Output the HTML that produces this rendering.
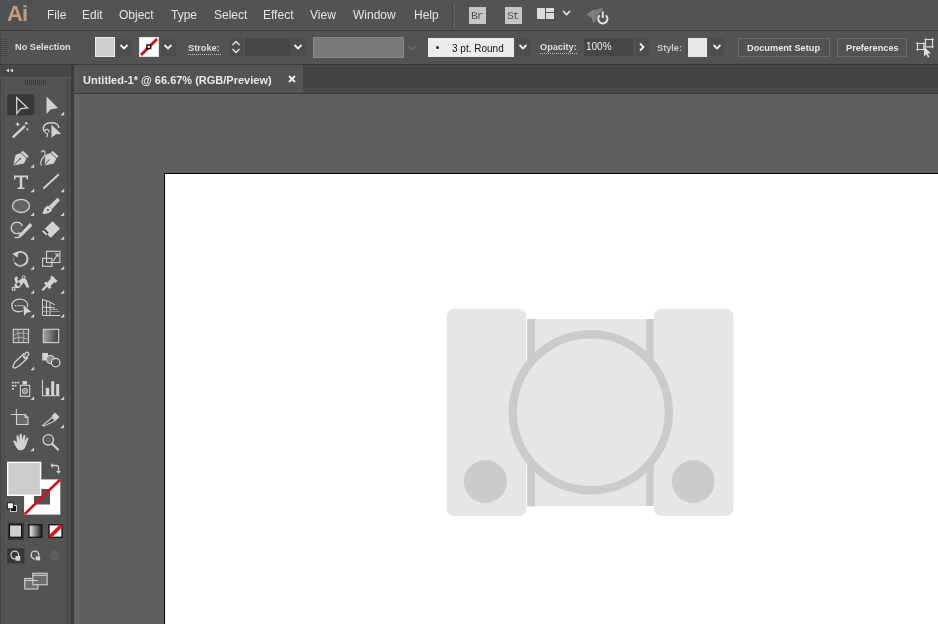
<!DOCTYPE html>
<html><head><meta charset="utf-8">
<style>
*{margin:0;padding:0;box-sizing:border-box}
html,body{width:938px;height:624px;overflow:hidden;background:#535353;font-family:"Liberation Sans",sans-serif;}
.a{position:absolute}
.mi,.lbl,div{-webkit-font-smoothing:antialiased}
body{will-change:transform}
.mi{position:absolute;top:8px;font-size:12px;color:#e4e4e4;line-height:14px;white-space:nowrap}
.lbl{position:absolute;font-size:9.2px;font-weight:bold;color:#dedede;line-height:12px;white-space:nowrap}
.chev{position:absolute;background:#4d4d4d;}
svg{position:absolute;overflow:visible}
</style></head><body>
<!-- MENU BAR -->
<div class="a" style="left:0;top:0;width:938px;height:30px;background:#535353"></div>
<div class="a" style="left:0;top:30px;width:938px;height:1px;background:#3a3a3a"></div>
<div class="a" style="left:0px;top:0px;width:32px;height:25px;background:#4e5256"></div>
<div class="a" style="left:7px;top:2px;font-size:22px;font-weight:bold;color:#c59a7c;line-height:24px;letter-spacing:-1px;text-shadow:0 0 2px rgba(120,90,70,.6)">Ai</div>
<div class="mi" style="left:47px">File</div>
<div class="mi" style="left:82px">Edit</div>
<div class="mi" style="left:119px">Object</div>
<div class="mi" style="left:171px">Type</div>
<div class="mi" style="left:214px">Select</div>
<div class="mi" style="left:263px">Effect</div>
<div class="mi" style="left:310px">View</div>
<div class="mi" style="left:353px">Window</div>
<div class="mi" style="left:414px">Help</div>
<div id="mbicons">
<div class="a" style="left:452px;top:3px;width:1px;height:24px;background:#454545"></div>
<div class="a" style="left:453px;top:3px;width:2px;height:24px;background:#5e5e5e"></div>
<div class="a" style="left:469px;top:7px;width:17px;height:17px;background:#c6c6c6"></div>
<div class="a" style="left:471px;top:9px;font-size:11.5px;color:#555;line-height:13px;font-family:'Liberation Mono',monospace;letter-spacing:-1.2px">Br</div>
<div class="a" style="left:505px;top:7px;width:17px;height:17px;background:#c6c6c6"></div>
<div class="a" style="left:507px;top:9px;font-size:11.5px;color:#555;line-height:13px;font-family:'Liberation Mono',monospace;letter-spacing:-1.2px">St</div>
<div class="a" style="left:537px;top:8px;width:8px;height:11px;background:#dadada"></div>
<div class="a" style="left:546px;top:8px;width:8px;height:3.5px;background:#dadada"></div>
<div class="a" style="left:546px;top:12.5px;width:8px;height:6.5px;background:#dadada"></div>
<svg style="left:562px;top:10px" width="9" height="6"><path d="M1 1 L4.5 4.5 L8 1" fill="none" stroke="#e8e8e8" stroke-width="1.7"/></svg>
<svg style="left:585px;top:4px" width="24" height="22" viewBox="0 0 24 22">
 <path d="M1.5 10.5 C4 8 8 5.5 11 5 L9.5 7.5 C12 5.5 15 4 18 3.5 L17 6.5 L14 9 L12 13 L10 18 L8 19 L7 14 Z" fill="#7e7e7e"/>
 <path d="M9 9 L12 12" stroke="#6c6c6c" stroke-width="0.8"/>
 <path d="M14.8 11.3 A4.6 4.6 0 1 0 20.8 11.3" fill="none" stroke="#dedede" stroke-width="2"/>
 <rect x="16.8" y="7.5" width="2" height="6.5" fill="#dedede"/>
</svg>
</div>

<!-- CONTROL BAR -->
<div id="ctrl">
<div class="a" style="left:0;top:31px;width:938px;height:33px;background:#535353"></div>
<div class="a" style="left:0px;top:33px;width:1px;height:30px;background:#474747"></div><div class="a" style="left:1px;top:39px;width:7px;height:17px;background:repeating-linear-gradient(#464646 0 1px,#585858 1px 2px)"></div>
<div class="lbl" style="left:15px;top:41px">No Selection</div>
<div class="a" style="left:95px;top:37px;width:20px;height:20px;background:#cfcfcf;border:1px solid #ececec"></div>
<div class="chev" style="left:117px;top:39px;width:15px;height:17px"></div>
<svg style="left:119px;top:44px" width="10" height="6"><path d="M1.5 1 L5 4.5 L8.5 1" fill="none" stroke="#f0f0f0" stroke-width="1.8"/></svg>
<div class="a" style="left:139px;top:37px;width:20px;height:20px;background:#fff;border:1px solid #e0e0e0"></div>
<svg style="left:139px;top:37px" width="20" height="20"><path d="M2 18 L18 2" stroke="#d0121b" stroke-width="3"/><rect x="8" y="8" width="3.6" height="3.6" fill="#fff" stroke="#200000" stroke-width="1.4"/></svg>
<div class="chev" style="left:161px;top:39px;width:15px;height:17px"></div>
<svg style="left:163px;top:44px" width="10" height="6"><path d="M1.5 1 L5 4.5 L8.5 1" fill="none" stroke="#f0f0f0" stroke-width="1.8"/></svg>
<div class="lbl" style="left:188px;top:42px;">Stroke:</div>
<div class="a" style="left:188px;top:54px;width:33px;height:1px;background:repeating-linear-gradient(90deg,#bdbdbd 0 1px,transparent 1px 2px)"></div>
<div class="chev" style="left:229px;top:38px;width:14px;height:18px"></div>
<svg style="left:231px;top:40px" width="10" height="14"><path d="M1.5 5 L5 1.5 L8.5 5 M1.5 9 L5 12.5 L8.5 9" fill="none" stroke="#e6e6e6" stroke-width="1.4"/></svg>
<div class="a" style="left:245px;top:38px;width:45px;height:18px;background:#464646"></div>
<div class="chev" style="left:290px;top:38px;width:16px;height:18px"></div>
<svg style="left:293px;top:44px" width="10" height="6"><path d="M1.5 1 L5 4.5 L8.5 1" fill="none" stroke="#f0f0f0" stroke-width="1.8"/></svg>
<div class="a" style="left:313px;top:37px;width:91px;height:21px;background:#7a7a7a;border:1px solid #888"></div>
<svg style="left:407px;top:45px" width="10" height="6"><path d="M1.5 1 L5 4.5 L8.5 1" fill="none" stroke="#6a6a6a" stroke-width="1.4"/></svg>
<div class="a" style="left:428px;top:38px;width:86px;height:19px;background:#ececec"></div>
<div class="a" style="left:436px;top:46px;width:3px;height:3px;border-radius:50%;background:#222"></div>
<div class="lbl" style="left:452px;top:43px;color:#111;font-weight:normal;font-size:10px">3 pt. Round</div>
<div class="chev" style="left:516px;top:38px;width:15px;height:18px"></div>
<svg style="left:518px;top:44px" width="10" height="6"><path d="M1.5 1 L5 4.5 L8.5 1" fill="none" stroke="#f0f0f0" stroke-width="1.8"/></svg>
<div class="lbl" style="left:540px;top:41px;">Opacity:</div>
<div class="a" style="left:540px;top:53px;width:37px;height:1px;background:repeating-linear-gradient(90deg,#bdbdbd 0 1px,transparent 1px 2px)"></div>
<div class="a" style="left:584px;top:38px;width:49px;height:18px;background:#464646"></div>
<div class="lbl" style="left:586px;top:41px;color:#eeeeee;font-weight:normal;font-size:10px">100%</div>
<div class="chev" style="left:635px;top:38px;width:14px;height:18px"></div>
<svg style="left:639px;top:42px" width="6" height="10"><path d="M1 1.5 L4.5 5 L1 8.5" fill="none" stroke="#f0f0f0" stroke-width="1.8"/></svg>
<div class="lbl" style="left:657px;top:42px;color:#c8c8c8">Style:</div>
<div class="a" style="left:688px;top:38px;width:19px;height:19px;background:#e8e8e8"></div>
<div class="chev" style="left:710px;top:38px;width:14px;height:18px"></div>
<svg style="left:712px;top:44px" width="10" height="6"><path d="M1.5 1 L5 4.5 L8.5 1" fill="none" stroke="#f0f0f0" stroke-width="1.8"/></svg>
<div class="a" style="left:738px;top:38px;width:92px;height:19px;border:1px solid #6a6a6a;background:#535353"></div>
<div class="lbl" style="left:747px;top:42px;color:#e8e8e8">Document Setup</div>
<div class="a" style="left:837px;top:38px;width:70px;height:19px;border:1px solid #6a6a6a;background:#535353"></div>
<div class="lbl" style="left:846px;top:42px;color:#e8e8e8">Preferences</div>
<svg style="left:914px;top:37px" width="22" height="22" viewBox="0 0 22 22">
 <path d="M3.5 6.5 H9.8 V12.5 H3.5Z M11.5 2.5 H18.5 V9.8 H11.5Z" fill="none" stroke="#dcdcdc" stroke-width="1.2"/>
 <path d="M2 6.5 H3.5 M3.5 5 V6.5 M9.8 5 V6.5 M10 6.5 H11 M2 12.5 H3.5 M3.5 12.5 V14 M10.5 2.5 H11.5 M11.5 1 V2.5 M18.5 1 V2.5 M18.5 2.5 H20 M18.5 9.8 H20 M18.5 9.8 V11" stroke="#c8c8c8" stroke-width="1"/>
 <path d="M10 9.5 L10 19.5 L12.2 17.3 L14 20.5 L15.5 19.7 L13.8 16.6 L17 16.5 Z" fill="#dedede"/>
</svg>
</div>
<div class="a" style="left:0;top:64px;width:938px;height:1px;background:#3a3a3a"></div>

<!-- TOOLS PANEL -->
<div class="a" style="left:0;top:65px;width:72px;height:559px;background:#535353"></div>
<div class="a" style="left:0;top:65px;width:72px;height:12px;background:#474747"></div>
<div class="a" style="left:0;top:77px;width:72px;height:1px;background:#5a5a5a"></div>
<div id="tools">
<svg style="left:0;top:0" width="74" height="624" viewBox="0 0 74 624">
 <g fill="#d8d8d8"><path d="M6 70.5 L9 68.5 L9 72.5Z M10 70.5 L13 68.5 L13 72.5Z"/></g>
 <g fill="#3e3e3e"><rect x="25" y="80" width="1" height="5"/><rect x="27" y="80" width="1" height="5"/><rect x="29" y="80" width="1" height="5"/><rect x="31" y="80" width="1" height="5"/><rect x="33" y="80" width="1" height="5"/><rect x="35" y="80" width="1" height="5"/><rect x="37" y="80" width="1" height="5"/><rect x="39" y="80" width="1" height="5"/><rect x="41" y="80" width="1" height="5"/><rect x="43" y="80" width="1" height="5"/><rect x="45" y="80" width="1" height="5"/></g>
 <rect x="7.3" y="94.2" width="27" height="21" rx="2" fill="#383838"/>
 <path d="M16.6 97.5 L27.6 108 L21 108.6 L16.8 113.6 Z" fill="none" stroke="#d2d2d2" stroke-width="1.3" stroke-linejoin="miter"/>
 <path d="M46.5 96.5 L58 108 L50.5 109.5 L46.5 114 Z" fill="#d2d2d2"/>
 <!-- corner triangles -->
 <g fill="#cfcfcf">
  <path d="M64.2 111.6 L64.2 115.4 L60.4 115.4Z"/>
  <path d="M34.2 164 L34.2 167.8 L30.4 167.8Z"/>
  <path d="M34.2 188.4 L34.2 192.2 L30.4 192.2Z"/><path d="M64.2 188.4 L64.2 192.2 L60.4 192.2Z"/>
  <path d="M34.2 212.2 L34.2 216 L30.4 216Z"/><path d="M64.2 212.2 L64.2 216 L60.4 216Z"/>
  <path d="M34.2 236 L34.2 239.8 L30.4 239.8Z"/><path d="M64.2 236 L64.2 239.8 L60.4 239.8Z"/>
  <path d="M34.2 266 L34.2 269.8 L30.4 269.8Z"/><path d="M64.2 266 L64.2 269.8 L60.4 269.8Z"/>
  <path d="M34.2 290 L34.2 293.8 L30.4 293.8Z"/><path d="M64.2 290 L64.2 293.8 L60.4 293.8Z"/>
  <path d="M34.2 313.8 L34.2 317.6 L30.4 317.6Z"/><path d="M64.2 313.8 L64.2 317.6 L60.4 317.6Z"/>
  <path d="M34.2 366.5 L34.2 370.3 L30.4 370.3Z"/>
  <path d="M34.2 396.3 L34.2 400.1 L30.4 400.1Z"/><path d="M64.2 396.3 L64.2 400.1 L60.4 400.1Z"/>
  <path d="M64 424.5 L64 428.3 L60.2 428.3Z"/>
  <path d="M34 447.5 L34 451.3 L30.2 451.3Z"/>
 </g>
 <!-- magic wand -->
 <path d="M13.5 136.6 L24.2 126.6" stroke="#d2d2d2" stroke-width="2.4" stroke-linecap="round"/>
 <path d="M17.7 121.8 L18.5 123.5 L20.2 124.3 L18.5 125.1 L17.7 126.8 L16.9 125.1 L15.2 124.3 L16.9 123.5Z" fill="#d2d2d2"/>
 <circle cx="26.2" cy="123.2" r="1.3" fill="#d2d2d2"/><circle cx="27.3" cy="129.3" r="1.1" fill="#d2d2d2"/>
 <!-- lasso -->
 <path d="M44.5 131.5 C42 128 43.5 123.5 50 122.8 C55.5 122.3 59 124.5 58.8 128" fill="none" stroke="#d2d2d2" stroke-width="1.4"/>
 <path d="M49 132.5 C49.5 130 47 128.5 45.5 129.8 C44 131 45 133.5 47 133.5 C48 133.5 47.5 136 46.5 137" fill="none" stroke="#d2d2d2" stroke-width="1.2"/>
 <path d="M51.3 124.5 L61.2 134 L56 134.3 L51.5 137.8 Z" fill="#d2d2d2"/>
 <!-- pen -->
 <path d="M22.7 150.7 L28.8 156.2 L27 158 L21 152.5Z" fill="#d2d2d2"/>
 <path d="M20.5 153 L26.5 158.5 L24 163.5 L13.3 165.5 L15.5 155Z" fill="#d2d2d2"/>
 <path d="M13.6 165.2 L19.5 159.3" stroke="#535353" stroke-width="1"/><circle cx="20" cy="158.8" r="1" fill="#535353"/>
 <!-- curvature pen -->
 <path d="M52.5 150.7 L58.6 156.2 L56.8 158 L50.8 152.5Z" fill="#d2d2d2"/>
 <path d="M50.3 153 L56.3 158.5 L53.8 163.5 L44.5 165.5 L45.5 155Z" fill="#d2d2d2"/>
 <path d="M44.8 165.2 L49.3 159.3" stroke="#535353" stroke-width="1"/>
 <path d="M41.3 165.5 C40 162 41 160 43 158 C45 156 45.5 153 44.5 151.5 C43.5 150 41.5 151 41.5 152.5" fill="none" stroke="#d2d2d2" stroke-width="1.2"/>
 <!-- type -->
 <path d="M14 175.5 L28 175.5 L28 179.5 L26.8 179.5 L26.2 177.3 L22.2 177.3 L22.2 187.5 L24.5 187.5 L24.5 189 L17.5 189 L17.5 187.5 L19.8 187.5 L19.8 177.3 L15.8 177.3 L15.2 179.5 L14 179.5Z" fill="#d2d2d2"/>
 <!-- line -->
 <path d="M44 188 L58.3 174.8" stroke="#d2d2d2" stroke-width="1.9" stroke-linecap="round"/>
 <!-- ellipse -->
 <ellipse cx="21" cy="205.9" rx="8.5" ry="6.6" fill="#646464" stroke="#d2d2d2" stroke-width="1.3"/>
 <!-- paintbrush -->
 <path d="M57.5 197.8 L60 200.3 L52 209 L49 206Z" fill="#d2d2d2"/>
 <path d="M48.2 205.5 L52.2 209.5 C51 212.5 47.5 214.2 42.7 214 C43.2 209.8 45 206.5 48.2 205.5Z" fill="#d2d2d2"/>
 <circle cx="48" cy="210" r="1" fill="#535353"/>
 <!-- shaper -->
 <path d="M20.5 232.5 A5.8 5.8 0 1 1 22.5 226" fill="#606060" stroke="#d2d2d2" stroke-width="1.3"/>
 <path d="M30 223 L32.5 225.5 L21 237 L18.2 238 L18.8 235Z" fill="#d2d2d2"/>
 <path d="M19 237.5 L14.5 237.5" stroke="#d2d2d2" stroke-width="1.2"/>
 <!-- eraser -->
 <path d="M52.5 221.3 L60 228.8 L49.5 239 L42 231.5Z" fill="#d2d2d2"/>
 <path d="M43.5 230 L47.5 234 L48.7 232.8 L44.7 228.8Z M46 235.5 L50 239.3 L51 238.3 L47 234.5Z" fill="#3a3a3a"/>
 <!-- rotate -->
 <path d="M15.5 254 A7 7 0 1 1 14.8 263" fill="none" stroke="#d2d2d2" stroke-width="1.9"/>
 <path d="M12.2 253.8 L18.5 251.5 L17.5 257.5Z" fill="#d2d2d2"/>
 <path d="M14.5 262.5 A7 7 0 0 1 13.8 257" fill="none" stroke="#a0a0a0" stroke-width="1.2" stroke-dasharray="1.2 1.2"/>
 <path d="M17 265.5 L24 265.5" stroke="#a0a0a0" stroke-width="1" stroke-dasharray="1.2 1.2"/>
 <!-- scale -->
 <rect x="46.5" y="251.3" width="13.4" height="11.2" fill="none" stroke="#d2d2d2" stroke-width="1.1"/>
 <rect x="42.6" y="258.3" width="9.3" height="8" fill="none" stroke="#d2d2d2" stroke-width="1.1"/>
 <path d="M53 261 L58 254 M55 254 L58 254 L58 257" fill="none" stroke="#d2d2d2" stroke-width="1.2"/>
 <!-- warp -->
 <path d="M15.5 277 C16.5 276 18 276.5 17.8 278 L17.3 280.5 C18.5 281 20 280 21 279 C22.5 277.5 25.5 278 26.5 280 C27.5 282 28.5 285.5 29.5 287.5 L26.5 287.5 C25.5 285.5 24.5 283 23.5 282.5 C22.5 284 21.5 286 19.5 287.5 C18 288.5 16 288.5 15 287.5 C14 286 14.5 284.5 15.5 283.5 C16 282.5 15 281 14.5 280 C14 279 14.5 277.8 15.5 277Z" fill="#d2d2d2"/>
 <circle cx="18.5" cy="284.2" r="1.5" fill="#535353" stroke="#535353"/>
 <circle cx="23.7" cy="277.2" r="1.5" fill="none" stroke="#d2d2d2" stroke-width="1"/>
 <rect x="12.3" y="287.6" width="2.6" height="2.6" fill="none" stroke="#d2d2d2" stroke-width="1"/>
 <!-- pin -->
 <path d="M52 275.5 L57.5 281 L55.5 283 L54.5 282 L50.5 286 L51.5 287 L49.5 289 L44 283.5 L46 281.5 L47 282.5 L51 278.5 L50 277.5Z" fill="#d2d2d2"/>
 <path d="M47 285.5 L42.8 289.7" stroke="#d2d2d2" stroke-width="2.2" stroke-linecap="round"/>
 <!-- shape builder -->
 <path d="M23 310.5 C20 312 16 312 13.5 310 C11 307.5 11.5 303 14 301 C17 298.5 22 298.5 25 300.5 C27.5 302 28 305 27 307" fill="none" stroke="#d2d2d2" stroke-width="1.3"/>
 <g fill="#d2d2d2"><rect x="14.8" y="305" width="1.3" height="1.3"/><rect x="17" y="305" width="1.3" height="1.3"/><rect x="19.2" y="305" width="1.3" height="1.3"/><rect x="21.4" y="305" width="1.3" height="1.3"/></g>
 <path d="M23.5 305 L31.3 312 L27 312.5 L24 316 Z" fill="#d2d2d2"/>
 <!-- perspective grid -->
 <path d="M42.5 299 L42.5 315.5 L60 315.5 M42.5 299.3 L50 302 L55 305 M42.5 307 L50 307.5 L55 308 M46.5 300.5 L46.5 315 M50 302 L50 315" fill="none" stroke="#d2d2d2" stroke-width="1"/>
 <path d="M42.5 311.5 L59.5 311.5 M50 309.5 L58 309.5" stroke="#a8a8a8" stroke-width="0.8"/>
 <!-- mesh -->
 <rect x="13.3" y="329.3" width="15.3" height="13.3" fill="#5e5e5e" stroke="#d2d2d2" stroke-width="1.1"/>
 <path d="M13.3 336 C17 333 19 332 28.5 334 M13.3 339 C18 337 22 337 28.5 339.5 M18 329.3 C17 333 19.5 337 18.5 342.6 M23.5 329.3 C22.5 333 25 337 23 342.6" fill="none" stroke="#b8b8b8" stroke-width="0.9"/>
 <!-- gradient -->
 <defs><linearGradient id="gr" x1="0" x2="1"><stop offset="0" stop-color="#a4a4a4"/><stop offset="1" stop-color="#3e3e3e"/></linearGradient>
 <linearGradient id="gr2" x1="0" x2="1"><stop offset="0" stop-color="#f4f4f4"/><stop offset="1" stop-color="#1a1a1a"/></linearGradient></defs>
 <rect x="43.3" y="329.3" width="15.3" height="13.3" fill="url(#gr)" stroke="#d2d2d2" stroke-width="1.1"/>
 <!-- eyedropper -->
 <path d="M26 352.5 C27.5 351.5 29.5 353.5 28.5 355 L26.5 357 L27.5 358 L26 359.5 L19 366 L15 368 L13.3 367.5 L13 366 L15 362 L22 355.5 L23.5 354 L24.5 355Z" fill="none" stroke="#d2d2d2" stroke-width="1.3"/>
 <path d="M23 356 L26.5 359.5" stroke="#d2d2d2" stroke-width="1.8"/>
 <!-- blend -->
 <rect x="42.2" y="353" width="5.8" height="7.5" fill="#d2d2d2"/>
 <circle cx="50.5" cy="359.5" r="4" fill="#8a8a8a" stroke="#d2d2d2" stroke-width="1.1"/>
 <circle cx="55.7" cy="362.6" r="4.3" fill="#535353" stroke="#d2d2d2" stroke-width="1.2"/>
 <!-- symbol sprayer -->
 <g fill="#d2d2d2"><rect x="12" y="381.7" width="1.8" height="1.8"/><rect x="14.7" y="381.7" width="1.8" height="1.8"/><rect x="17.4" y="381.7" width="1.8" height="1.8"/><rect x="12" y="384.9" width="1.8" height="1.8"/><rect x="14.7" y="384.9" width="1.8" height="1.8"/><rect x="12" y="388" width="1.8" height="1.8"/></g>
 <rect x="22.5" y="381" width="4.5" height="3.5" fill="#d2d2d2"/>
 <rect x="20.4" y="385.3" width="9.3" height="11" fill="none" stroke="#d2d2d2" stroke-width="1.1"/>
 <circle cx="24.9" cy="390.9" r="2.4" fill="none" stroke="#d2d2d2" stroke-width="1.2"/><circle cx="24.9" cy="390.9" r="0.8" fill="#d2d2d2"/>
 <!-- column graph -->
 <path d="M42.5 379.8 L42.5 395.8 L59.6 395.8" fill="none" stroke="#d2d2d2" stroke-width="1.1"/>
 <rect x="45.8" y="387.8" width="3.4" height="8" fill="#d2d2d2"/><rect x="51.2" y="381.3" width="3" height="14.5" fill="#d2d2d2"/><rect x="56.2" y="384" width="3" height="11.8" fill="#d2d2d2"/>
 <!-- artboard -->
 <path d="M16.3 409 L16.3 414.5 L10.8 414.5" fill="none" stroke="#d2d2d2" stroke-width="1"/>
 <path d="M16.5 414.5 L25 414.5 L28 417.5 L28 424.5 L16.5 424.5Z" fill="#6a6a6a" stroke="#d2d2d2" stroke-width="1.1"/>
 <path d="M25 414.5 L25 417.5 L28 417.5" fill="none" stroke="#d2d2d2" stroke-width="1"/>
 <!-- slice -->
 <path d="M55 412.5 L59.5 417 L56 420.5 L51.5 416Z" fill="#d2d2d2"/>
 <path d="M52 417.5 L55.2 420.7 L44 426 L42.5 425.5Z" fill="none" stroke="#d2d2d2" stroke-width="1.1"/>
 <!-- hand -->
 <path d="M14 443 C12.5 441.8 13.5 440 15 440.8 L17 442.5 L16.5 436.5 C16.3 435 18.3 434.8 18.6 436.3 L19.5 440 L19.7 434.8 C19.8 433.5 21.8 433.5 21.9 434.8 L22.1 440 L23.4 435.8 C23.8 434.5 25.6 435 25.4 436.3 L24.7 441 L26.5 438 C27.3 437 28.8 437.8 28.3 439 L26 445.5 C25 448.5 23.5 450.3 20.5 450.3 C17.5 450.3 16.5 448 14 443Z" fill="#d2d2d2"/>
 <!-- zoom -->
 <circle cx="48.3" cy="439.8" r="5.2" fill="none" stroke="#d2d2d2" stroke-width="1.4"/>
 <circle cx="48.3" cy="439.8" r="1.8" fill="none" stroke="#8a8a8a" stroke-width="0.8"/>
 <path d="M52 443.8 L58 449.5" stroke="#d2d2d2" stroke-width="2.2" stroke-linecap="round"/>
 <!-- fill / stroke -->
 <rect x="24.1" y="479.4" width="36.2" height="35.2" fill="#ffffff"/>
 <rect x="34" y="489" width="16" height="15.5" fill="#535353"/>
 <path d="M24.6 514.2 L60 479.8" stroke="#d4101a" stroke-width="2.6"/>
 <rect x="7" y="461.7" width="34.3" height="34.3" fill="#ffffff"/>
 <rect x="8.4" y="463.1" width="31.5" height="31.5" fill="#cccccc"/>
 <!-- swap arrows -->
 <path d="M51 465.5 L56.5 465.5 Q58.5 465.5 58.5 467.5 L58.5 471" fill="none" stroke="#d2d2d2" stroke-width="1.3"/>
 <path d="M50.5 465.5 L53 463 L53 468Z M58.5 473.8 L56 471 L61 471Z" fill="#d2d2d2"/>
 <!-- default fill stroke -->
 <rect x="10.5" y="505.5" width="6" height="6" fill="#111" stroke="#ddd" stroke-width="0.9"/>
 <rect x="7.3" y="502.8" width="6" height="6" fill="#fff" stroke="#111" stroke-width="0.9"/>
 <!-- color/gradient/none buttons -->
 <rect x="7.9" y="522.5" width="16" height="17.5" fill="#383838"/>
 <rect x="9.4" y="524.8" width="12.3" height="12.5" fill="#cfcfcf" stroke="#111" stroke-width="1.3"/>
 <rect x="29" y="524.8" width="12.8" height="12.5" fill="url(#gr2)" stroke="#111" stroke-width="1.3"/>
 <rect x="49" y="524.8" width="13" height="12.5" fill="#fff" stroke="#111" stroke-width="1.3"/>
 <path d="M49.8 537 L61.5 525.3" stroke="#e0101c" stroke-width="3.6"/>
 <!-- draw modes -->
 <rect x="7.2" y="548.2" width="17.3" height="15.2" fill="#383838"/>
 <circle cx="14.8" cy="555" r="3.8" fill="none" stroke="#d2d2d2" stroke-width="1.3"/>
 <rect x="15.5" y="556" width="4.8" height="4.8" fill="#d2d2d2"/>
 <circle cx="35" cy="555" r="3.8" fill="none" stroke="#d2d2d2" stroke-width="1.3"/>
 <rect x="35.5" y="556" width="4.8" height="4.8" fill="#d2d2d2" stroke="#535353" stroke-width="0.6"/>
 <circle cx="55" cy="555.5" r="4" fill="#5c5c5c" stroke="#666" stroke-width="1.1"/>
 <!-- screen mode -->
 <rect x="24.8" y="578.5" width="13" height="10.5" fill="#6e6e6e" stroke="#d2d2d2" stroke-width="1.1"/>
 <rect x="32.8" y="573.3" width="14.3" height="11.5" fill="#6e6e6e" stroke="#d2d2d2" stroke-width="1.1"/>
 <path d="M24.8 580.5 L37.8 580.5 M32.8 575.3 L47 575.3" stroke="#d2d2d2" stroke-width="1"/>
</svg>
</div>
<div class="a" style="left:0px;top:78px;width:1px;height:546px;background:#454545"></div>
<div class="a" style="left:3px;top:78px;width:1px;height:546px;background:#4b4b4b"></div>
<div class="a" style="left:66px;top:78px;width:5px;height:546px;background:#505050"></div>
<div class="a" style="left:67px;top:78px;width:1px;height:546px;background:#484848"></div>
<div class="a" style="left:71px;top:65px;width:3px;height:559px;background:#3c3c3c"></div>

<!-- TAB BAR -->
<div class="a" style="left:74px;top:65px;width:864px;height:28px;background:#444444"></div>
<div class="a" style="left:74px;top:65px;width:229px;height:28px;background:#535353"></div>
<div class="a" style="left:74px;top:66px;width:5px;height:27px;background:#575757"></div>
<div class="a" style="left:83px;top:74px;font-size:11px;font-weight:bold;color:#e8e8e8;line-height:13px;white-space:nowrap">Untitled-1* @ 66.67% (RGB/Preview)</div>
<div class="a" style="left:303px;top:88px;width:635px;height:5px;background:#484848"></div>
<div class="a" style="left:74px;top:93px;width:864px;height:1px;background:#3b3b3b"></div>
<svg style="left:288px;top:75px" width="8" height="8" viewBox="0 0 8 8"><path d="M1 1 L7 7 M7 1 L1 7" stroke="#f0f0f0" stroke-width="1.9"/></svg>
<div class="a" style="left:298px;top:69px;width:1px;height:22px;background:#5a5a5a"></div>
<div class="a" style="left:301px;top:69px;width:1px;height:22px;background:#5a5a5a"></div>

<!-- PASTEBOARD + ARTBOARD -->
<div class="a" style="left:74px;top:94px;width:864px;height:530px;background:#5f5f5f"></div>
<div class="a" style="left:74px;top:94px;width:5px;height:530px;background:#646464"></div>
<div class="a" style="left:164px;top:173px;width:774px;height:451px;background:#fff;border-top:1px solid #000;border-left:1px solid #000"></div>
<svg style="left:0;top:0" width="938" height="624" viewBox="0 0 938 624">
  <rect x="527" y="319" width="127" height="187" fill="#e6e6e6"/>
  <rect x="527.3" y="319" width="7.7" height="187.5" fill="#cbcbcb"/>
  <rect x="646.4" y="319" width="7.2" height="187" fill="#cbcbcb"/>
  <rect x="446.8" y="309" width="79.5" height="207" rx="7" fill="#e6e6e6"/>
  <rect x="653.8" y="309" width="79.7" height="206.7" rx="7" fill="#e6e6e6"/>
  <circle cx="590.8" cy="412.2" r="78" fill="#e6e6e6" stroke="#cbcbcb" stroke-width="8.4"/>
  <circle cx="485.4" cy="481.5" r="21.5" fill="#cbcbcb"/>
  <circle cx="693.3" cy="481.5" r="21.4" fill="#cbcbcb"/>
</svg>
</body></html>
